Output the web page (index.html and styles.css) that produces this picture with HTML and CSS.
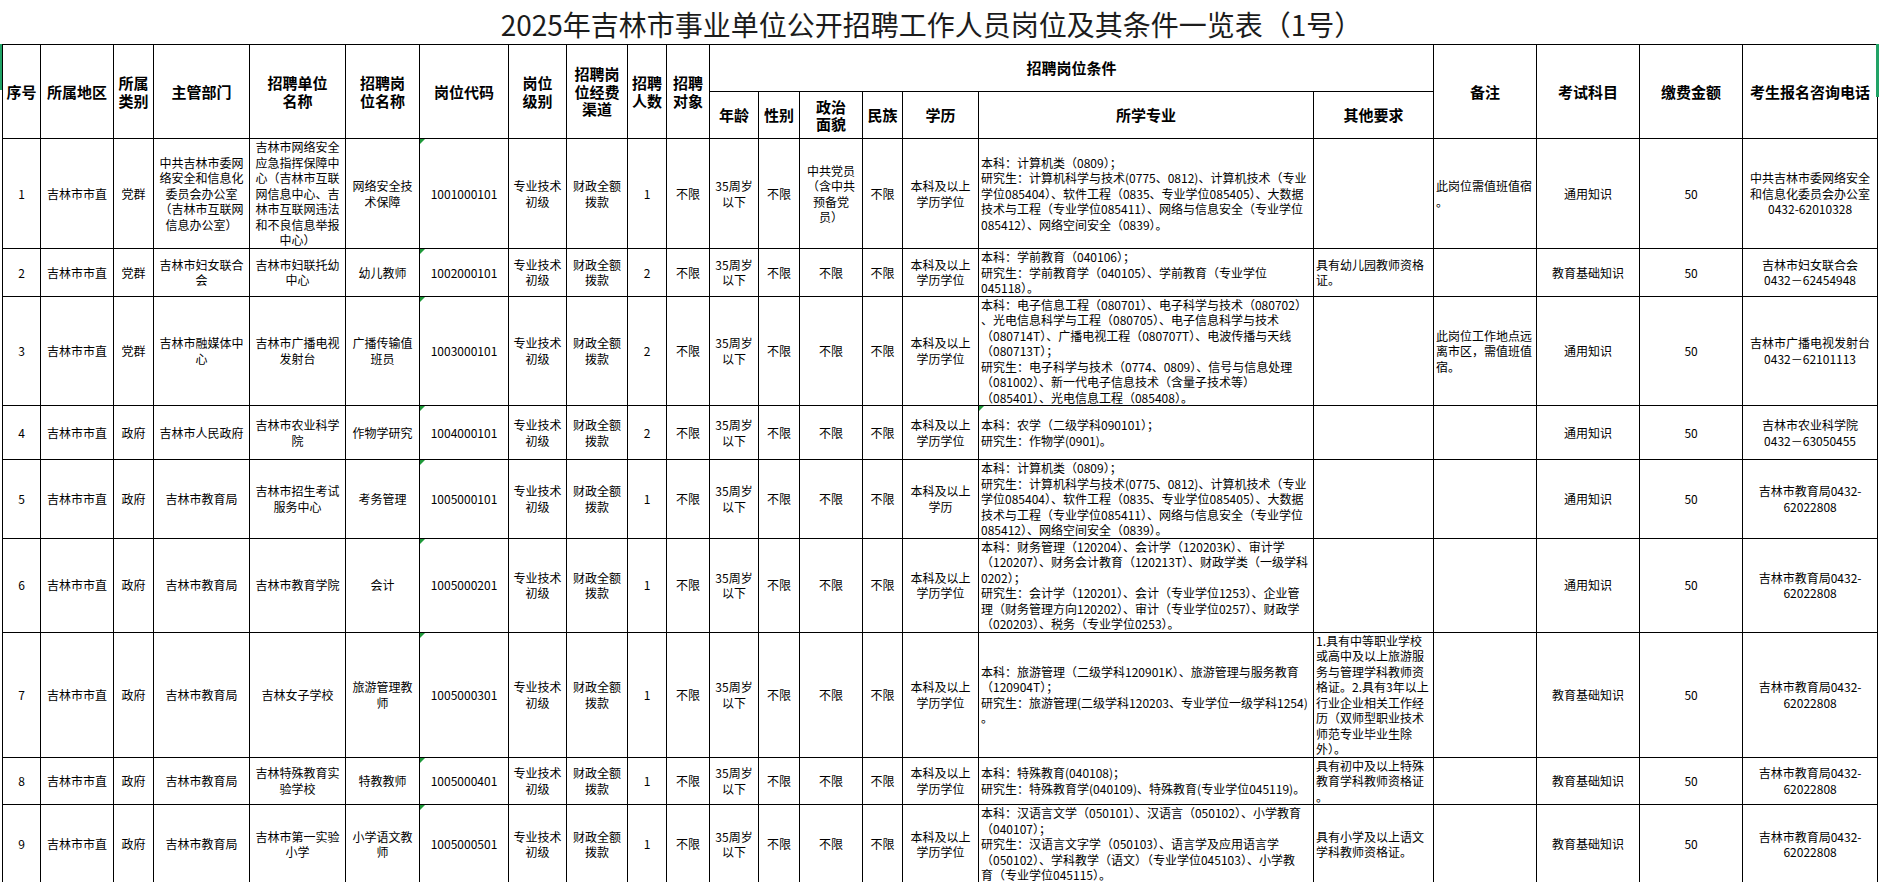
FILE: index.html
```html
<!DOCTYPE html>
<html lang="zh-CN">
<head>
<meta charset="utf-8">
<title>2025年吉林市事业单位公开招聘工作人员岗位及其条件一览表（1号）</title>
<link rel="stylesheet" href="styles.css">
</head>
<body>
<div class="sheet">
  <div class="title">2025年吉林市事业单位公开招聘工作人员岗位及其条件一览表（1号）</div>
  <table class="grid">
    <colgroup>
      <col class="c-no"><col class="c-area"><col class="c-type"><col class="c-dept"><col class="c-unit"><col class="c-post"><col class="c-code"><col class="c-level"><col class="c-fund"><col class="c-num"><col class="c-target">
      <col class="c-age"><col class="c-sex"><col class="c-pol"><col class="c-eth"><col class="c-edu"><col class="c-major"><col class="c-other">
      <col class="c-note"><col class="c-exam"><col class="c-fee"><col class="c-tel">
    </colgroup>
    <thead>
      <tr class="hr1">
        <th rowspan="2">序号</th>
        <th rowspan="2">所属地区</th>
        <th rowspan="2">所属<br>类别</th>
        <th rowspan="2">主管部门</th>
        <th rowspan="2">招聘单位<br>名称</th>
        <th rowspan="2">招聘岗<br>位名称</th>
        <th rowspan="2">岗位代码</th>
        <th rowspan="2">岗位<br>级别</th>
        <th rowspan="2">招聘岗<br>位经费<br>渠道</th>
        <th rowspan="2">招聘<br>人数</th>
        <th rowspan="2">招聘<br>对象</th>
        <th colspan="7">招聘岗位条件</th>
        <th rowspan="2">备注</th>
        <th rowspan="2">考试科目</th>
        <th rowspan="2">缴费金额</th>
        <th rowspan="2">考生报名咨询电话</th>
      </tr>
      <tr class="hr2">
        <th>年龄</th>
        <th>性别</th>
        <th>政治<br>面貌</th>
        <th>民族</th>
        <th>学历</th>
        <th>所学专业</th>
        <th>其他要求</th>
      </tr>
    </thead>
    <tbody>
      <tr class="r1">
        <td>1</td><td>吉林市市直</td><td>党群</td>
        <td>中共吉林市委网<br>络安全和信息化<br>委员会办公室<br>（吉林市互联网<br>信息办公室）</td>
        <td>吉林市网络安全<br>应急指挥保障中<br>心（吉林市互联<br>网信息中心、吉<br>林市互联网违法<br>和不良信息举报<br>中心）</td>
        <td>网络安全技<br>术保障</td>
        <td class="flag">1001000101</td>
        <td>专业技术<br>初级</td><td>财政全额<br>拨款</td><td>1</td><td>不限</td>
        <td>35周岁<br>以下</td><td>不限</td><td>中共党员<br>（含中共<br>预备党<br>员）</td><td>不限</td><td>本科及以上<br>学历学位</td>
        <td class="l">本科：计算机类（0809）；<br>研究生：计算机科学与技术(0775、0812)、计算机技术（专业<br>学位085404）、软件工程（0835、专业学位085405）、大数据<br>技术与工程（专业学位085411）、网络与信息安全（专业学位<br>085412）、网络空间安全（0839）。</td>
        <td class="l"></td>
        <td class="l">此岗位需值班值宿<br>。</td>
        <td>通用知识</td><td>50</td>
        <td>中共吉林市委网络安全<br>和信息化委员会办公室<br>0432-62010328</td>
      </tr>
      <tr class="r2">
        <td>2</td><td>吉林市市直</td><td>党群</td>
        <td>吉林市妇女联合<br>会</td>
        <td>吉林市妇联托幼<br>中心</td>
        <td>幼儿教师</td>
        <td class="flag">1002000101</td>
        <td>专业技术<br>初级</td><td>财政全额<br>拨款</td><td>2</td><td>不限</td>
        <td>35周岁<br>以下</td><td>不限</td><td>不限</td><td>不限</td><td>本科及以上<br>学历学位</td>
        <td class="l">本科：学前教育（040106）；<br>研究生：学前教育学（040105）、学前教育（专业学位<br>045118）。</td>
        <td class="l">具有幼儿园教师资格<br>证。</td>
        <td class="l"></td>
        <td>教育基础知识</td><td>50</td>
        <td>吉林市妇女联合会<br>0432－62454948</td>
      </tr>
      <tr class="r3">
        <td>3</td><td>吉林市市直</td><td>党群</td>
        <td>吉林市融媒体中<br>心</td>
        <td>吉林市广播电视<br>发射台</td>
        <td>广播传输值<br>班员</td>
        <td class="flag">1003000101</td>
        <td>专业技术<br>初级</td><td>财政全额<br>拨款</td><td>2</td><td>不限</td>
        <td>35周岁<br>以下</td><td>不限</td><td>不限</td><td>不限</td><td>本科及以上<br>学历学位</td>
        <td class="l">本科：电子信息工程（080701）、电子科学与技术（080702）<br>、光电信息科学与工程（080705）、电子信息科学与技术<br>（080714T）、广播电视工程（080707T）、电波传播与天线<br>（080713T）；<br>研究生：电子科学与技术（0774、0809）、信号与信息处理<br>（081002）、新一代电子信息技术（含量子技术等）<br>（085401）、光电信息工程（085408）。</td>
        <td class="l"></td>
        <td class="l">此岗位工作地点远<br>离市区，需值班值<br>宿。</td>
        <td>通用知识</td><td>50</td>
        <td>吉林市广播电视发射台<br>0432－62101113</td>
      </tr>
      <tr class="r4">
        <td>4</td><td>吉林市市直</td><td>政府</td>
        <td>吉林市人民政府</td>
        <td>吉林市农业科学<br>院</td>
        <td>作物学研究</td>
        <td class="flag">1004000101</td>
        <td>专业技术<br>初级</td><td>财政全额<br>拨款</td><td>2</td><td>不限</td>
        <td>35周岁<br>以下</td><td>不限</td><td>不限</td><td>不限</td><td>本科及以上<br>学历学位</td>
        <td class="l flag">本科：农学（二级学科090101）；<br>研究生：作物学(0901)。</td>
        <td class="l"></td>
        <td class="l"></td>
        <td>通用知识</td><td>50</td>
        <td>吉林市农业科学院<br>0432－63050455</td>
      </tr>
      <tr class="r5">
        <td>5</td><td>吉林市市直</td><td>政府</td>
        <td>吉林市教育局</td>
        <td>吉林市招生考试<br>服务中心</td>
        <td>考务管理</td>
        <td class="flag">1005000101</td>
        <td>专业技术<br>初级</td><td>财政全额<br>拨款</td><td>1</td><td>不限</td>
        <td>35周岁<br>以下</td><td>不限</td><td>不限</td><td>不限</td><td>本科及以上<br>学历</td>
        <td class="l">本科：计算机类（0809）；<br>研究生：计算机科学与技术(0775、0812)、计算机技术（专业<br>学位085404）、软件工程（0835、专业学位085405）、大数据<br>技术与工程（专业学位085411）、网络与信息安全（专业学位<br>085412）、网络空间安全（0839）。</td>
        <td class="l"></td>
        <td class="l"></td>
        <td>通用知识</td><td>50</td>
        <td>吉林市教育局0432-<br>62022808</td>
      </tr>
      <tr class="r6">
        <td>6</td><td>吉林市市直</td><td>政府</td>
        <td>吉林市教育局</td>
        <td>吉林市教育学院</td>
        <td>会计</td>
        <td class="flag">1005000201</td>
        <td>专业技术<br>初级</td><td>财政全额<br>拨款</td><td>1</td><td>不限</td>
        <td>35周岁<br>以下</td><td>不限</td><td>不限</td><td>不限</td><td>本科及以上<br>学历学位</td>
        <td class="l">本科：财务管理（120204）、会计学（120203K）、审计学<br>（120207）、财务会计教育（120213T）、财政学类（一级学科<br>0202）；<br>研究生：会计学（120201）、会计（专业学位1253）、企业管<br>理（财务管理方向120202）、审计（专业学位0257）、财政学<br>（020203）、税务（专业学位0253）。</td>
        <td class="l"></td>
        <td class="l"></td>
        <td>通用知识</td><td>50</td>
        <td>吉林市教育局0432-<br>62022808</td>
      </tr>
      <tr class="r7">
        <td>7</td><td>吉林市市直</td><td>政府</td>
        <td>吉林市教育局</td>
        <td>吉林女子学校</td>
        <td>旅游管理教<br>师</td>
        <td class="flag">1005000301</td>
        <td>专业技术<br>初级</td><td>财政全额<br>拨款</td><td>1</td><td>不限</td>
        <td>35周岁<br>以下</td><td>不限</td><td>不限</td><td>不限</td><td>本科及以上<br>学历学位</td>
        <td class="l">本科：旅游管理（二级学科120901K）、旅游管理与服务教育<br>（120904T）；<br>研究生：旅游管理(二级学科120203、专业学位一级学科1254)<br>。</td>
        <td class="l">1.具有中等职业学校<br>或高中及以上旅游服<br>务与管理学科教师资<br>格证。2.具有3年以上<br>行业企业相关工作经<br>历（双师型职业技术<br>师范专业毕业生除<br>外）。</td>
        <td class="l"></td>
        <td>教育基础知识</td><td>50</td>
        <td>吉林市教育局0432-<br>62022808</td>
      </tr>
      <tr class="r8">
        <td>8</td><td>吉林市市直</td><td>政府</td>
        <td>吉林市教育局</td>
        <td>吉林特殊教育实<br>验学校</td>
        <td>特教教师</td>
        <td class="flag">1005000401</td>
        <td>专业技术<br>初级</td><td>财政全额<br>拨款</td><td>1</td><td>不限</td>
        <td>35周岁<br>以下</td><td>不限</td><td>不限</td><td>不限</td><td>本科及以上<br>学历学位</td>
        <td class="l">本科：特殊教育(040108)；<br>研究生：特殊教育学(040109)、特殊教育(专业学位045119)。</td>
        <td class="l">具有初中及以上特殊<br>教育学科教师资格证<br>。</td>
        <td class="l"></td>
        <td>教育基础知识</td><td>50</td>
        <td>吉林市教育局0432-<br>62022808</td>
      </tr>
      <tr class="r9">
        <td>9</td><td>吉林市市直</td><td>政府</td>
        <td>吉林市教育局</td>
        <td>吉林市第一实验<br>小学</td>
        <td>小学语文教<br>师</td>
        <td class="flag">1005000501</td>
        <td>专业技术<br>初级</td><td>财政全额<br>拨款</td><td>1</td><td>不限</td>
        <td>35周岁<br>以下</td><td>不限</td><td>不限</td><td>不限</td><td>本科及以上<br>学历学位</td>
        <td class="l">本科：汉语言文学（050101）、汉语言（050102）、小学教育<br>（040107）；<br>研究生：汉语言文字学（050103）、语言学及应用语言学<br>（050102）、学科教学（语文）（专业学位045103）、小学教<br>育（专业学位045115）。</td>
        <td class="l">具有小学及以上语文<br>学科教师资格证。</td>
        <td class="l"></td>
        <td>教育基础知识</td><td>50</td>
        <td>吉林市教育局0432-<br>62022808</td>
      </tr>
      <tr class="r10">
        <td></td><td></td><td></td><td></td><td></td><td></td><td class="flag"></td><td></td><td></td><td></td><td></td>
        <td></td><td></td><td></td><td></td><td></td><td></td><td></td><td></td><td></td><td></td><td></td>
      </tr>
    </tbody>
  </table>
  <div class="edge edge-left"></div>
  <div class="edge edge-right"></div>
</div>
</body>
</html>
```

FILE: styles.css
```css
html, body {
  margin: 0;
  padding: 0;
  background: #fff;
}
body {
  font-family: "Noto Sans CJK SC", "Noto Sans", sans-serif;
  color: #000;
  overflow: hidden;
}
.sheet {
  position: relative;
  width: 1879px;
  height: 882px;
  overflow: hidden;
}
.title {
  box-sizing: border-box;
  width: 1875px;
  height: 44px;
  margin-left: 2px;
  padding: 4px 16px 0 0;
  display: flex;
  align-items: center;
  justify-content: center;
  font-size: 28px;
  font-weight: 400;
  color: #1c1c1c;
  white-space: nowrap;
}
.grid {
  border-collapse: collapse;
  table-layout: fixed;
  width: 1875px;
  margin-left: 2px;
}
.c-no { width: 38px; }
.c-area { width: 73px; }
.c-type { width: 40px; }
.c-dept { width: 96px; }
.c-unit { width: 96px; }
.c-post { width: 74px; }
.c-code { width: 89px; }
.c-level { width: 58px; }
.c-fund { width: 61px; }
.c-num { width: 39px; }
.c-target { width: 43px; }
.c-age { width: 49px; }
.c-sex { width: 41px; }
.c-pol { width: 63px; }
.c-eth { width: 40px; }
.c-edu { width: 76px; }
.c-major { width: 335px; }
.c-other { width: 120px; }
.c-note { width: 103px; }
.c-exam { width: 103px; }
.c-fee { width: 103px; }
.c-tel { width: 135px; }

.grid th,
.grid td {
  border: 1px solid #000;
  padding: 0 2px;
  text-align: center;
  vertical-align: middle;
  white-space: nowrap;
  overflow: visible;
  position: relative;
}
.grid th {
  font-size: 15px;
  font-weight: 700;
  line-height: 17.5px;
}
.grid td {
  font-size: 12px;
  line-height: 15.5px;
}
.grid td.l {
  text-align: left;
}
.hr1 { height: 47px; }
.hr2 { height: 47px; }
.r1 { height: 110px; }
.r2 { height: 46px; }
.r3 { height: 109px; }
.r4 { height: 54px; }
.r5 { height: 78px; }
.r6 { height: 94px; }
.r7 { height: 125px; }
.r8 { height: 47px; }
.r9 { height: 79px; }
.r10 { height: 40px; }

.grid td.flag::before {
  content: "";
  position: absolute;
  left: 0;
  top: 0;
  width: 0;
  height: 0;
  border-top: 5px solid #1f9a3a;
  border-right: 5px solid transparent;
}

.edge {
  position: absolute;
  background: #21a366;
}
.edge-left {
  left: 0;
  top: 44px;
  width: 2px;
  height: 46px;
}
.edge-right {
  left: 1876px;
  top: 44px;
  width: 3px;
  height: 53px;
}
```
